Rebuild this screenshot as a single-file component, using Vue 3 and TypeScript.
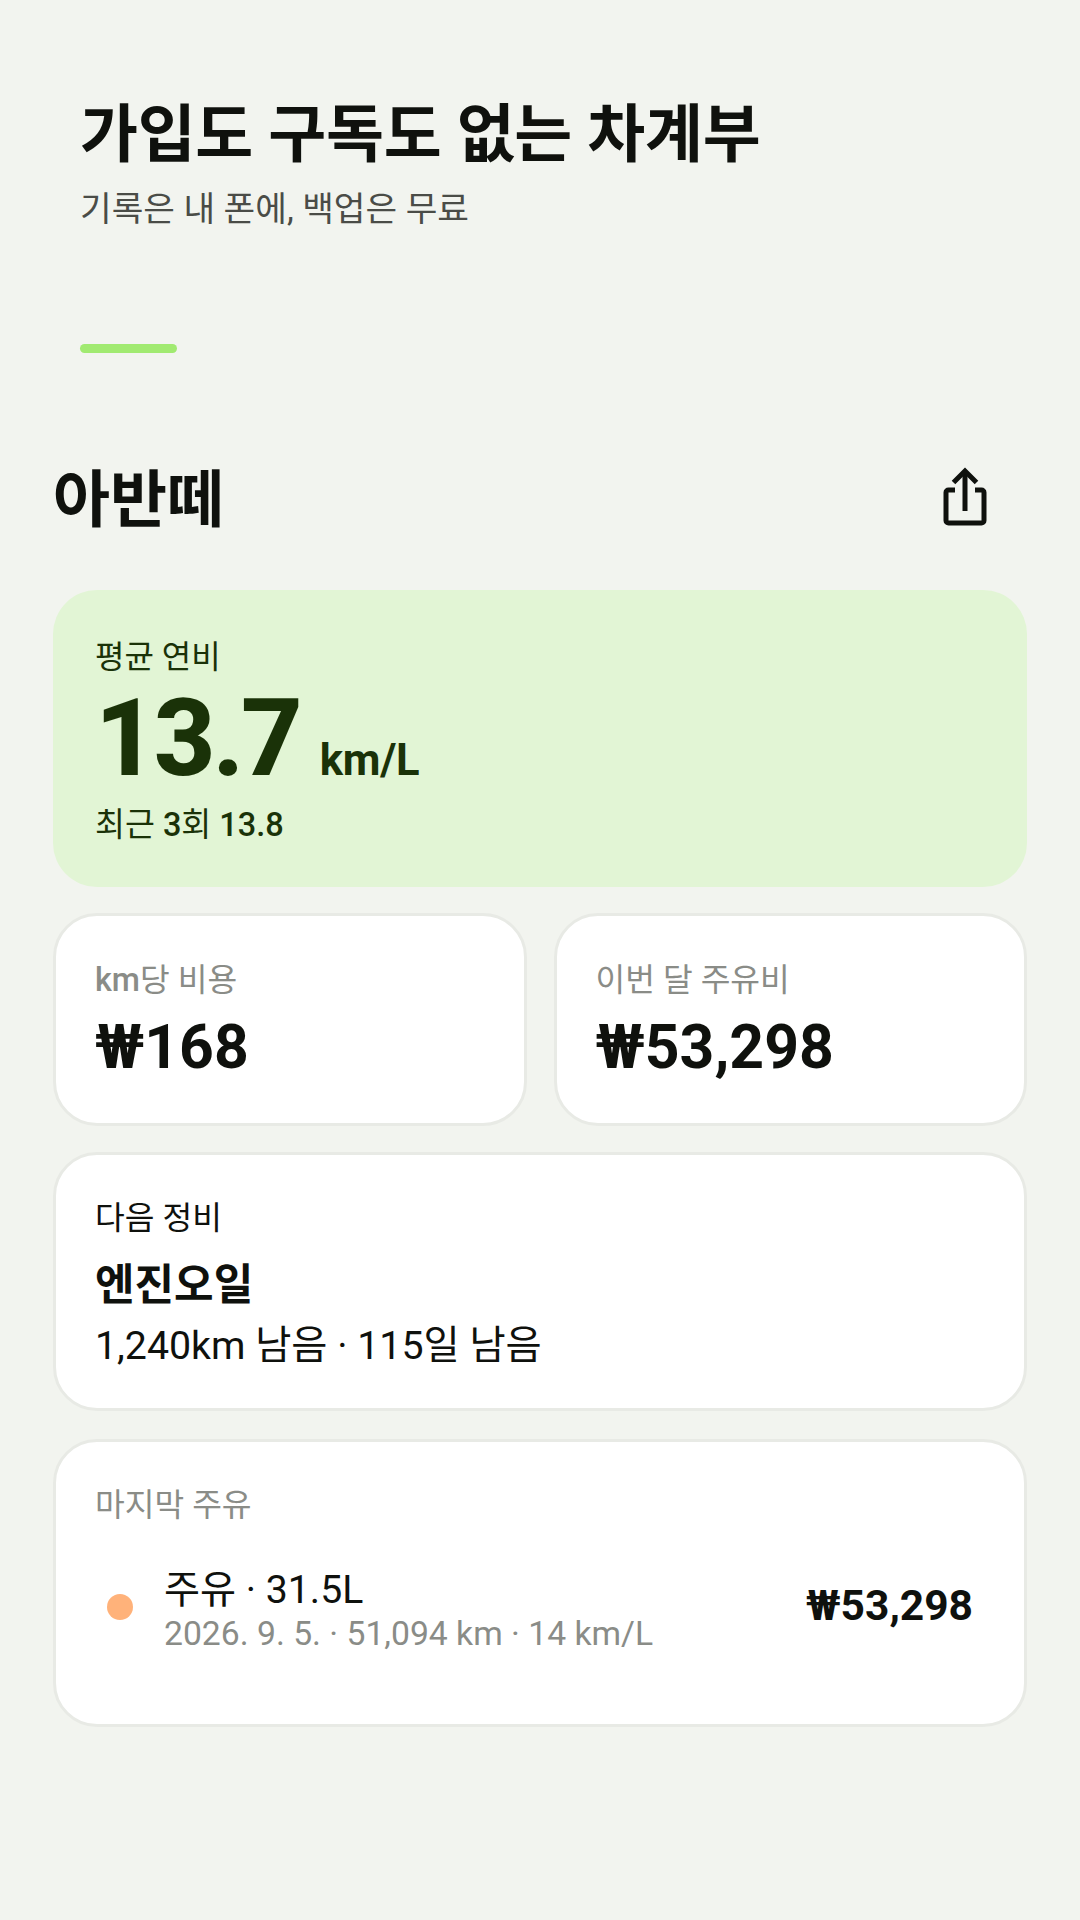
<script setup lang="ts">
interface Metric {
  prefix?: string
  label: string
  value: string
}

const metrics: Metric[] = [
  { prefix: 'km', label: '당 비용', value: '₩168' },
  { label: '이번 달 주유비', value: '₩53,298' },
]
</script>

<template>
  <div class="screen">
    <header class="intro">
      <h1 class="intro-title">가입도 구독도 없는 차계부</h1>
      <p class="intro-sub">기록은 내 폰에, 백업은 무료</p>
      <div class="accent"></div>
    </header>

    <div class="car-row">
      <h2 class="car-name">아반떼</h2>
      <svg class="share" width="48" height="60" viewBox="0 0 48 60" fill="none" stroke="#0f110d" stroke-width="5">
        <path d="M24 44V4" />
        <path d="M12.500 15.500 24 4 35.500 15.500" />
        <path d="M14 23H7.500a2.500 2.500 0 0 0-2.500 2.500v28a2.500 2.500 0 0 0 2.500 2.500h33a2.500 2.500 0 0 0 2.500-2.500v-28a2.500 2.500 0 0 0-2.500-2.500H34" />
      </svg>
    </div>

    <section class="hero">
      <div class="hero-label">평균 연비</div>
      <div class="hero-value"><span class="hero-num">13.7</span><span class="hero-unit">km/L</span></div>
      <div class="hero-recent">최근 <span class="latin">3</span>회 <span class="latin">13.8</span></div>
    </section>

    <div class="metric-row">
      <section v-for="m in metrics" :key="m.label" class="card metric">
        <div class="muted-label"><span v-if="m.prefix" class="latin">{{ m.prefix }}</span>{{ m.label }}</div>
        <div class="metric-value">{{ m.value }}</div>
      </section>
    </div>

    <section class="card service">
      <div class="service-label">다음 정비</div>
      <div class="service-name">엔진오일</div>
      <div class="service-detail">1,240km 남음 · 115일 남음</div>
    </section>

    <section class="card last">
      <div class="muted-label">마지막 주유</div>
      <div class="entry">
        <span class="dot"></span>
        <div class="entry-text">
          <div class="entry-title">주유 · 31.5L</div>
          <div class="entry-meta">2026. 9. 5. · 51,094 km · 14 km/L</div>
        </div>
        <div class="entry-price">₩53,298</div>
      </div>
    </section>
  </div>
</template>

<style scoped>
.screen {
  box-sizing: border-box;
  width: 1080px;
  height: 1920px;
  padding: 0 53px;
  background: #f2f4ef;
  color: #0f110d;
  font-family: Roboto, 'Noto Sans CJK KR', sans-serif;
  overflow: hidden;
}

.intro {
  padding: 93px 0 0 27px;
}

.intro-title {
  margin: 0;
  font-size: 63px;
  font-weight: 700;
  line-height: 84px;
  letter-spacing: -0.3px;
}

.intro-sub {
  margin: 10px 0 0;
  font-size: 34.400px;
  line-height: 44px;
  color: #4a4c47;
}

.accent {
  width: 97px;
  height: 9px;
  margin-top: 113px;
  border-radius: 5px;
  background: #a1ea71;
}

.car-row {
  display: flex;
  align-items: center;
  justify-content: space-between;
  height: 90px;
  margin-top: 103px;
  padding-right: 38px;
}

.car-name {
  margin: 0;
  font-size: 62px;
  font-weight: 700;
  line-height: 84px;
}

.share {
  margin-bottom: 8px;
}

.hero {
  box-sizing: border-box;
  height: 297px;
  margin-top: 44px;
  padding: 47px 42px 0;
  border-radius: 44px;
  background: #e2f5d5;
  color: #1a3208;
}

.hero-label {
  font-size: 32px;
  line-height: 40px;
}

.hero-value {
  display: flex;
  align-items: baseline;
  gap: 20px;
  height: 96px;
  margin-top: 14px;
}

.hero-num {
  font-size: 107px;
  font-weight: 800;
  line-height: 96px;
  letter-spacing: -3px;
}

.hero-unit {
  font-size: 43.500px;
  font-weight: 700;
  letter-spacing: -0.300px;
}

.hero-recent {
  margin-top: 18px;
  font-size: 32.500px;
  line-height: 40px;
}

.card {
  box-sizing: border-box;
  border: 3px solid #e8eae5;
  border-radius: 44px;
  background: #fff;
}

.metric-row {
  display: grid;
  grid-template-columns: 1fr 1fr;
  gap: 27px;
  margin-top: 26px;
}

.metric {
  height: 213px;
  padding: 42px 39px 0;
}

.muted-label {
  font-size: 32.300px;
  line-height: 44px;
  color: #8a8c87;
}

.latin {
  font-weight: 500;
}

.metric-value {
  margin-top: 8px;
  font-size: 60.700px;
  font-weight: 700;
  line-height: 76px;
}

.service {
  height: 259px;
  margin-top: 26px;
  padding: 41px 39px 0;
}

.service-label {
  font-size: 32.300px;
  line-height: 44px;
}

.service-name {
  margin-top: 15px;
  font-size: 43px;
  font-weight: 700;
  line-height: 60px;
}

.service-detail {
  margin-top: 5px;
  font-size: 39.300px;
  line-height: 52px;
}

.last {
  height: 288px;
  margin-top: 28px;
  padding: 41px 39px 0;
}

.entry {
  display: flex;
  align-items: center;
  margin-top: 32px;
  padding: 0 12px;
}

.dot {
  flex: none;
  width: 26px;
  height: 26px;
  border-radius: 50%;
  background: #ffb27a;
}

.entry-text {
  flex: 1;
  margin-left: 31px;
  padding-top: 8px;
}

.entry-title {
  font-size: 39.200px;
  line-height: 47px;
}

.entry-meta {
  font-size: 33.700px;
  line-height: 40px;
  color: #8a8c87;
}

.entry-price {
  margin-bottom: 2px;
  font-size: 42.500px;
  font-weight: 700;
}
</style>
